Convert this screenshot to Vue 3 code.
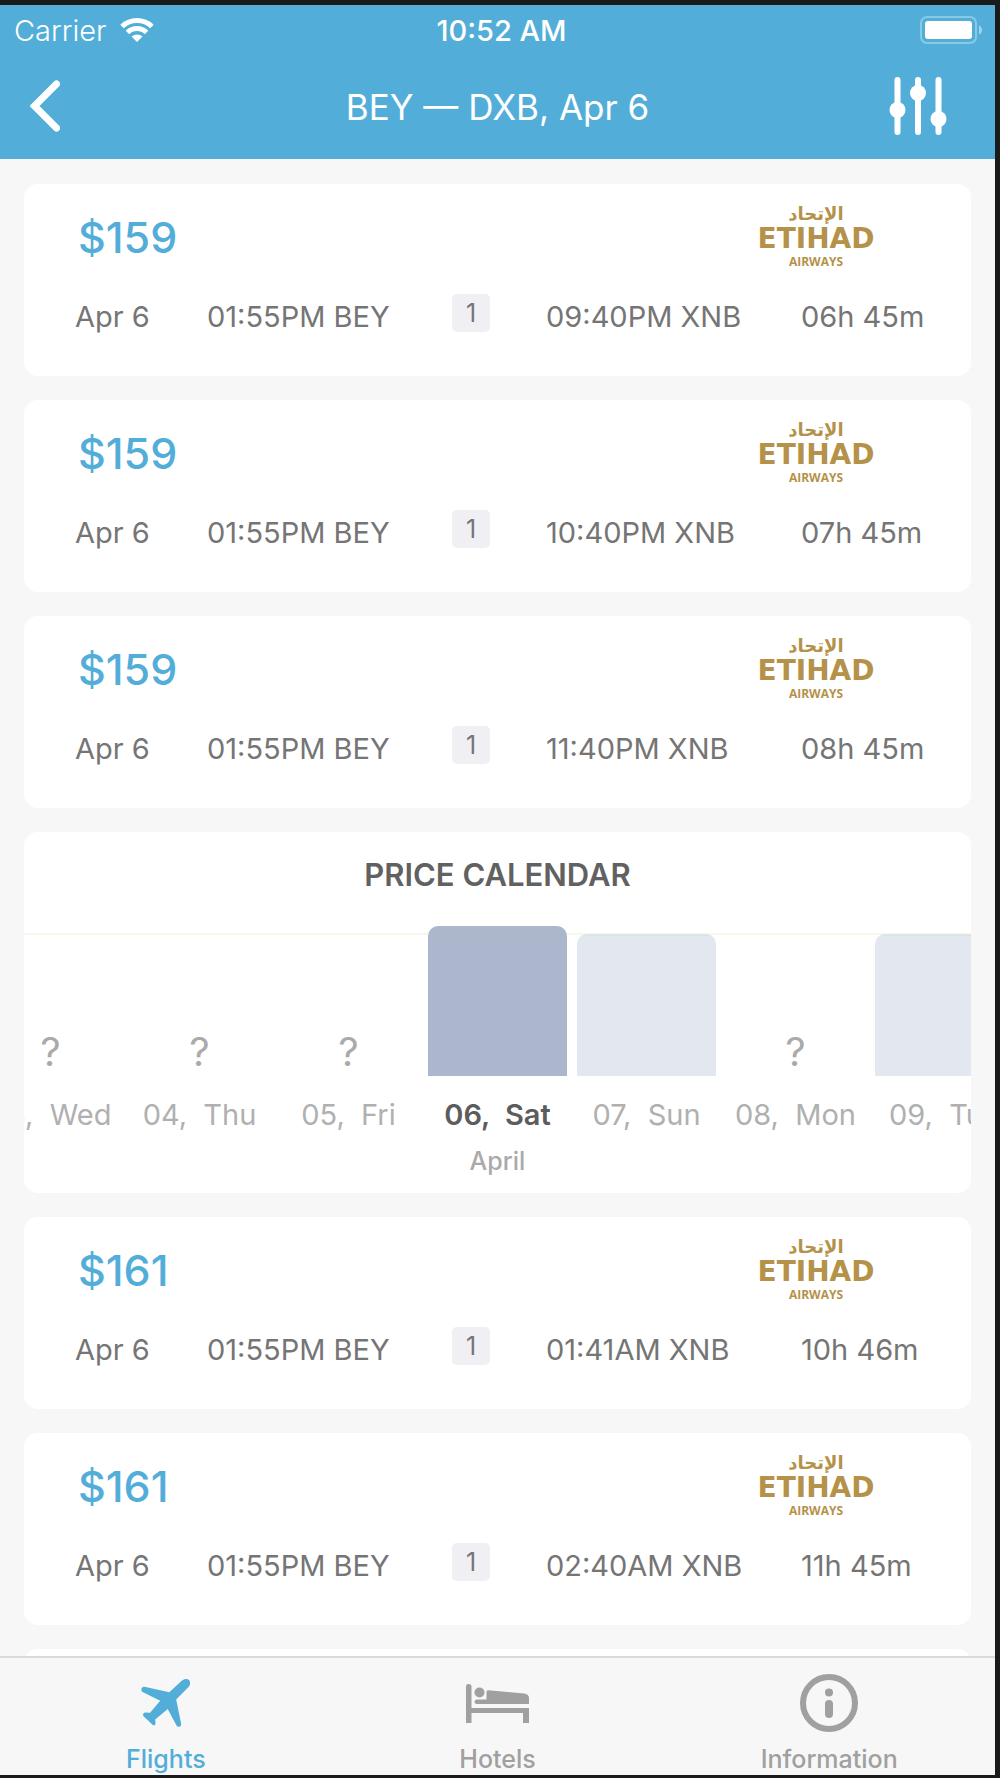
<script setup>
import { ref } from 'vue'

const flightsBefore = [
  { price: '$159', arrive: '09:40PM XNB', duration: '06h 45m' },
  { price: '$159', arrive: '10:40PM XNB', duration: '07h 45m' },
  { price: '$159', arrive: '11:40PM XNB', duration: '08h 45m' },
]
const flightsAfter = [
  { price: '$161', arrive: '01:41AM XNB', duration: '10h 46m' },
  { price: '$161', arrive: '02:40AM XNB', duration: '11h 45m' },
]
const sections = [
  { id: 'before', flights: flightsBefore },
  { id: 'calendar', flights: [] },
  { id: 'after', flights: flightsAfter },
]

const selected = ref('06')
const days = [
  { date: '03', name: 'Wed', height: 0 },
  { date: '04', name: 'Thu', height: 0 },
  { date: '05', name: 'Fri', height: 0 },
  { date: '06', name: 'Sat', height: 150 },
  { date: '07', name: 'Sun', height: 142 },
  { date: '08', name: 'Mon', height: 0 },
  { date: '09', name: 'Tue', height: 142 },
]
</script>

<template>
  <div class="screen">
    <header class="header">
      <div class="status">
        <div class="carrier">
          <span>Carrier</span>
          <svg width="34" height="24" viewBox="0 0 34 24" aria-hidden="true">
            <g fill="none" stroke="#fff" stroke-width="5">
              <path d="M2 8.500A22 22 0 0 1 32 8.500" />
              <path d="M7.500 14.500A13.500 13.500 0 0 1 26.500 14.500" />
            </g>
            <path d="M17 24L11.500 18.600A8 8 0 0 1 22.500 18.600Z" fill="#fff" />
          </svg>
        </div>
        <time class="clock">10:52 AM</time>
        <svg class="battery" width="63" height="28" viewBox="0 0 63 28" aria-hidden="true">
          <rect x="1" y="1" width="55" height="26" rx="6" fill="none" stroke="#86cae6" stroke-width="2" />
          <rect x="5" y="5" width="47" height="18" rx="3" fill="#fff" />
          <path d="M59 9.500Q62 11 62 14T59 18.500Z" fill="#9fd5eb" />
        </svg>
      </div>
      <div class="nav">
        <button class="icon-button" type="button" aria-label="Back">
          <svg width="30" height="52" viewBox="0 0 30 52">
            <path d="M26.500 4L4.500 26L26.500 48" fill="none" stroke="#fff" stroke-width="7" stroke-linecap="round" />
          </svg>
        </button>
        <h1>BEY — DXB, Apr 6</h1>
        <button class="icon-button filters" type="button" aria-label="Filters">
          <svg width="58" height="58" viewBox="0 0 58 58">
            <path d="M8.500 3V55M29 3V55M49.500 3V55" stroke="#fff" stroke-width="6" stroke-linecap="round" />
            <g fill="#fff">
              <circle cx="8.500" cy="33" r="8" />
              <circle cx="29" cy="16" r="8" />
              <circle cx="49.500" cy="42" r="8" />
            </g>
          </svg>
        </button>
      </div>
    </header>

    <main class="list">
      <template v-for="section in sections" :key="section.id">
        <section v-if="section.id === 'calendar'" class="card calendar">
          <h2>PRICE CALENDAR</h2>
          <div class="days">
            <button
              v-for="day in days"
              :key="day.date"
              type="button"
              class="day"
              :class="{ selected: day.date === selected }"
              @click="selected = day.date"
            >
              <span class="plot">
                <span v-if="day.height" class="bar" :style="{ height: day.height + 'px' }"></span>
                <span v-else class="unknown">?</span>
              </span>
              <span class="label">{{ day.date }},&nbsp; {{ day.name }}</span>
            </button>
          </div>
          <p class="month">April</p>
        </section>
        <article v-for="(flight, i) in section.flights" :key="i" class="card flight">
          <div class="summary">
            <strong class="price">{{ flight.price }}</strong>
            <div class="logo">
              <span class="logo-arabic" lang="ar" dir="rtl">الإتحاد</span>
              <span class="logo-name">ETIHAD</span>
              <span class="logo-sub">AIRWAYS</span>
            </div>
          </div>
          <div class="details">
            <span>Apr 6</span>
            <span>01:55PM BEY</span>
            <span class="stops">1</span>
            <span>{{ flight.arrive }}</span>
            <span>{{ flight.duration }}</span>
          </div>
        </article>
      </template>
      <article class="card flight"></article>
    </main>

    <nav class="tabs">
      <a href="#flights" class="tab active">
        <svg width="50" height="60" viewBox="0 0 50 60">
          <path d="M28.300 19.300L40.700 7.700C43.500 5.500 46.500 5.500 48 7C49.500 8.500 49.500 11 48 13.500L35.200 26.500L40.200 51Q40.300 53 38.500 53.700Q36.500 54.300 35.500 52.500L26.700 36L14.200 46.500L14.500 50.500Q14 53.300 11.800 52L2.300 43Q1.300 39.500 4.500 39.500L9 39.800L19.200 27.800L1 18.700Q0 17.500 .5 15.500Q1.200 13.500 3.500 13.800Z" fill="currentColor" />
        </svg>
        <span>Flights</span>
      </a>
      <a href="#hotels" class="tab">
        <svg width="64" height="60" viewBox="0 0 64 60" fill="currentColor">
          <path d="M0 13.500Q0 11 2.500 11Q5.500 11 5.500 13.500V35H63V50H57V40H5.500V50H0Z" />
          <circle cx="13.500" cy="19.500" r="5" />
          <path d="M20.500 19Q20.500 17 22.500 17.200L58 20.500Q63 21 63 25V31H11Q8.500 31 8.500 28.700Q8.500 26.500 11 26.500H20.500Z" />
        </svg>
        <span>Hotels</span>
      </a>
      <a href="#information" class="tab">
        <svg width="60" height="60" viewBox="0 0 60 60" fill="currentColor">
          <circle cx="30" cy="30" r="26" fill="none" stroke="currentColor" stroke-width="6" />
          <circle cx="30" cy="19.500" r="4" />
          <rect x="26" y="27" width="8" height="18" rx="4" />
        </svg>
        <span>Information</span>
      </a>
    </nav>
  </div>
</template>

<style>
body {
  background: #1a1a1a;
}
</style>

<style scoped>
* {
  box-sizing: border-box;
}
.screen {
  display: flex;
  flex-direction: column;
  height: 100vh;
  border: solid #1a1a1a;
  border-width: 5px 5px 3px 0;
  background: #f7f7f7;
  color: #757575;
  font-family: Inter, 'Liberation Sans', sans-serif;
  font-size: 29px;
}
h1,
h2,
p {
  margin: 0;
}
button {
  padding: 0;
  border: 0;
  background: none;
  color: inherit;
  font: inherit;
}
svg {
  display: block;
}
.header {
  flex: none;
  background: #52aed9;
  color: #fff;
}
.status,
.nav {
  display: grid;
  grid-template-columns: 1fr auto 1fr;
  align-items: center;
}
.status {
  height: 50px;
  padding: 0 12px 0 14px;
}
.carrier {
  display: flex;
  align-items: center;
  gap: 14px;
  font-weight: 300;
}
.clock {
  padding-left: 6px;
  font-weight: 500;
}
.battery {
  justify-self: end;
}
.nav {
  height: 104px;
  padding: 0 30px;
}
.nav h1 {
  font-size: 35px;
  font-weight: 400;
}
.icon-button {
  justify-self: start;
  margin-bottom: 3px;
}
.filters {
  justify-self: end;
  margin-right: 18px;
}
.list {
  display: flex;
  flex: 1;
  flex-direction: column;
  gap: 24px;
  min-height: 0;
  padding: 25px 24px 0;
  overflow: hidden;
}
.card {
  flex: none;
  border-radius: 14px;
  background: #fff;
}
.flight {
  min-height: 192px;
  padding: 23px 51px 36px;
}
.summary {
  display: flex;
  align-items: center;
  justify-content: space-between;
  height: 60px;
}
.price {
  padding-left: 3px;
  color: #52aed9;
  font-size: 43px;
  font-weight: 500;
  line-height: 52px;
}
.logo {
  display: flex;
  flex-direction: column;
  align-items: center;
  width: 122px;
  margin-right: 43px;
  color: #b5924a;
  font-family: 'DejaVu Sans', sans-serif;
  font-weight: 700;
}
.logo-arabic {
  font-size: 18px;
  line-height: 22px;
}
.logo-name {
  font-size: 28px;
  line-height: 28px;
}
.logo-sub {
  font-family: 'Open Sans', sans-serif;
  font-size: 12px;
  line-height: 18px;
}
.details {
  display: grid;
  grid-template-columns:
    minmax(0, 132fr) minmax(0, 245fr) minmax(0, 94fr)
    minmax(0, 255fr) minmax(0, 119fr);
  margin-top: 27px;
  line-height: 46px;
  white-space: nowrap;
}
.stops {
  width: 38px;
  height: 38px;
  border-radius: 5px;
  background: #efeff4;
  font-size: 25px;
  line-height: 38px;
  text-align: center;
}
.calendar {
  height: 361px;
  overflow: hidden;
}
.calendar h2 {
  color: #616161;
  font-size: 31px;
  font-weight: 600;
  line-height: 86px;
  text-align: center;
}
.days {
  display: flex;
  justify-content: center;
}
.day {
  flex: none;
  width: 149px;
  color: #b0b0b0;
}
.plot {
  display: flex;
  align-items: flex-end;
  justify-content: center;
  height: 158px;
  background: linear-gradient(#f4f9ea, #f4f9ea) 0 15px / 100% 2px no-repeat;
}
.bar {
  width: 139px;
  border-radius: 10px 10px 0 0;
  background: linear-gradient(#dbe5e6 2px, #e3e7ef 2px);
}
.unknown {
  color: #aaa;
  font-size: 40px;
  line-height: 48px;
}
.label {
  display: block;
  line-height: 78px;
  white-space: nowrap;
}
.selected .bar {
  background: linear-gradient(#acb6cc 8px, #abb8c6 8px, #abb8c6 10px, #acb6cc 10px);
}
.selected .label {
  color: #5c5c5c;
  font-weight: 600;
}
.month {
  color: #aaa;
  font-size: 25px;
  font-weight: 500;
  line-height: 14px;
  text-align: center;
}
.tabs {
  display: flex;
  flex: none;
  height: 119px;
  border-top: 2px solid #dadada;
  background: #f7f7f7;
}
.tab {
  display: flex;
  flex: 1 1 0;
  flex-direction: column;
  align-items: center;
  gap: 11px;
  padding-top: 15px;
  color: #a0a0a0;
  font-size: 25px;
  font-weight: 500;
  line-height: 30px;
  text-decoration: none;
}
.active {
  color: #52aed9;
}
</style>
